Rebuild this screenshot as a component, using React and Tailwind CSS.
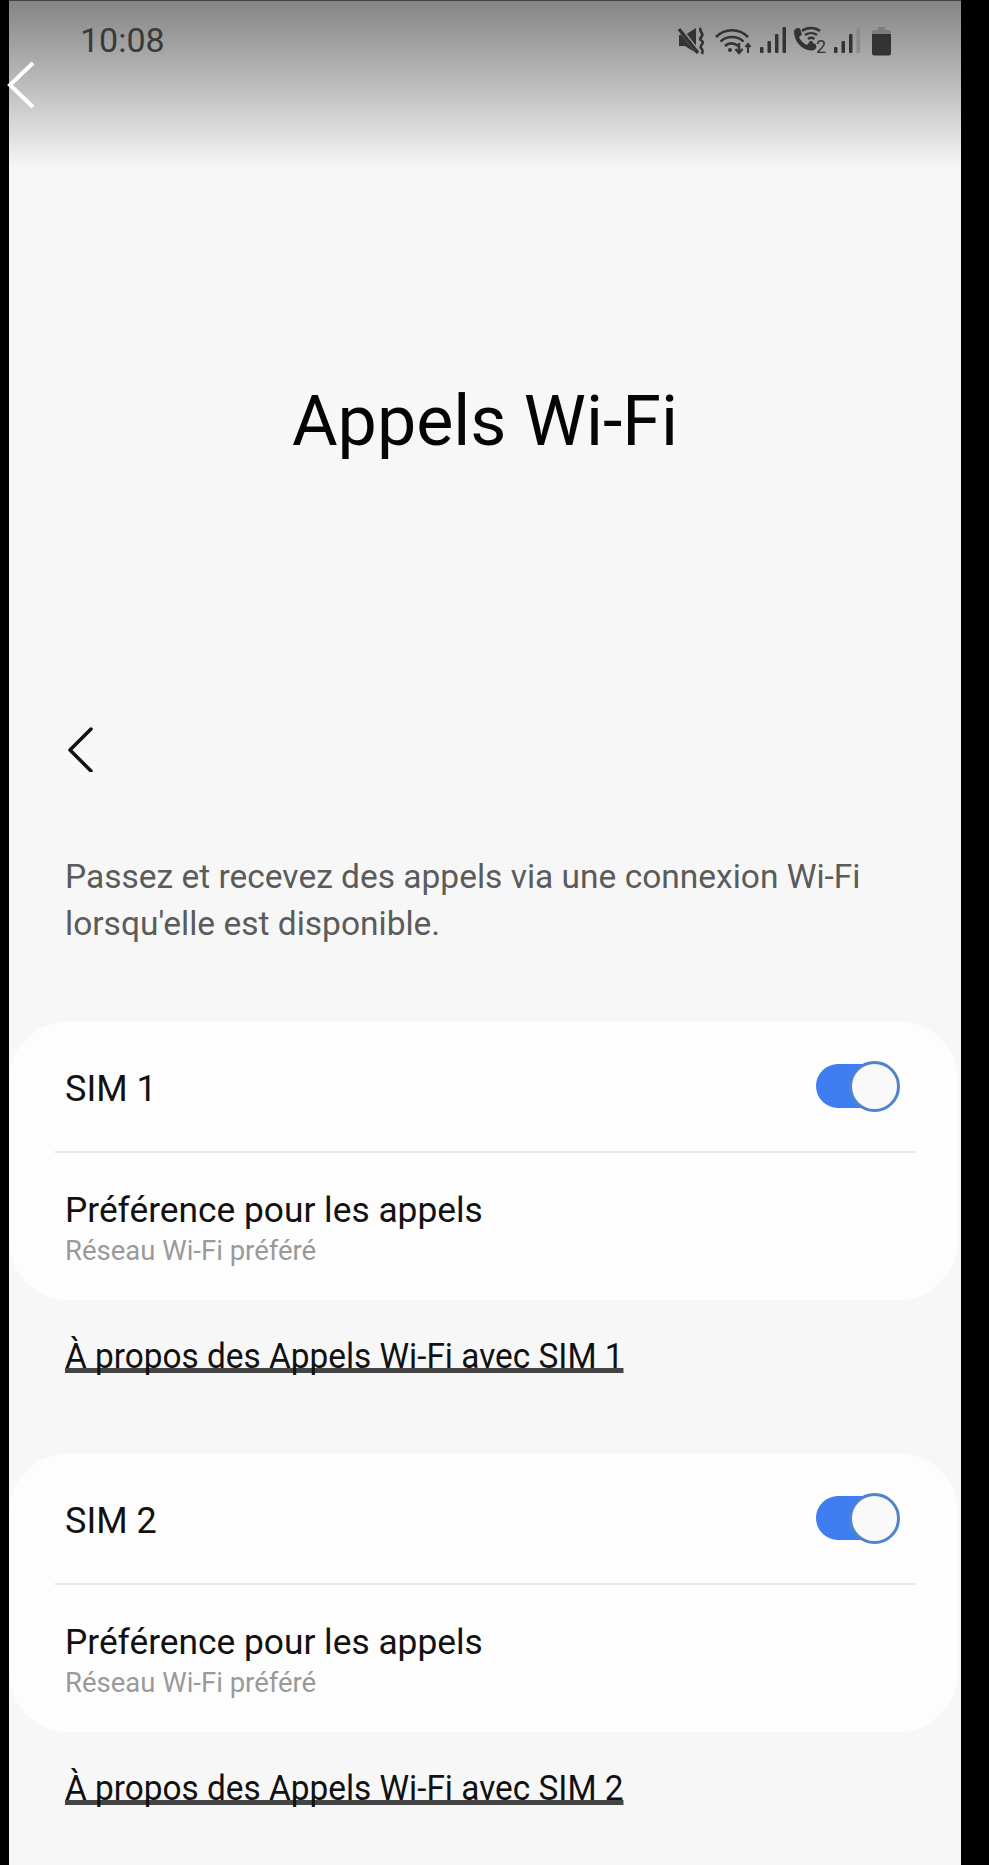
const font = { fontFamily: "Roboto, sans-serif" }

function MuteIcon() {
    return (
        <svg width="28" height="28" viewBox="0 0 28 28" fill="#333">
            <path d="M1 8h6l11-7v25l-11-7H1z" />
            <path d="M1 1l19 24" stroke="#9a9a9a" strokeWidth="5" />
            <path d="M1 2l19 24" stroke="#333" strokeWidth="3.400" />
            <path d="M23 1c-3 3 3 5 1 8s-3 3 0 5 -3 5 -1 7 2 3 1 6" fill="none" stroke="#333" strokeWidth="2.600" />
        </svg>
    )
}

function WifiIcon() {
    return (
        <svg width="38" height="28" viewBox="0 0 38 28" fill="none" stroke="#333" strokeWidth="2.600">
            <path d="M1 10c9-9 23-9 32 0" />
            <path d="M5.500 14.500c6.500-6 16.500-6 23 0" />
            <path d="M10 19c3.500-3.500 9-3.500 13 0" />
            <circle cx="15" cy="23" r="2" fill="#333" stroke="none" />
            <path d="M24 16v10M20.500 22l3.500 4 3.500-4" strokeWidth="2.400" />
            <path d="M33 26v-9M30.500 20l2.500-3 2.500 3" strokeWidth="2" />
        </svg>
    )
}

function Bars({ last = "#333" }) {
    return (
        <svg width="26" height="28" viewBox="0 0 26 28" fill="#333">
            <rect x="0" y="20" width="3.500" height="6" rx="1" />
            <rect x="7.500" y="14" width="3.500" height="12" rx="1" />
            <rect x="15" y="7" width="3.500" height="19" rx="1" />
            <rect x="22.500" y="0" width="3.500" height="26" rx="1" fill={last} />
        </svg>
    )
}

function WifiCallIcon() {
    return (
        <svg width="35" height="30" viewBox="0 0 35 30" fill="#333">
            <path d="M1 5c0-1 2-3 4-3l2 .5 2 6-3 2.500c1.500 3.500 4 6 8 8l2.500-3 6 2 1 2.500c0 2-2 4-5 4C8 24 1 15 1 5z" />
            <path d="M9 5c5-4 13-4 18 0M12 9c3.500-2.500 8.500-2.500 12 0M15 13c2-1.500 4.500-1.500 6.500 0" fill="none" stroke="#333" strokeWidth="2.400" />
            <circle cx="18" cy="16.500" r="1.800" />
            <text x="23" y="27" fontSize="18" fontFamily="Roboto, sans-serif">2</text>
        </svg>
    )
}

function BatteryIcon() {
    return (
        <svg width="19" height="29" viewBox="0 0 19 29">
            <path d="M6 0h7v3h-7z" fill="#7d7d7d" />
            <rect x="0" y="3" width="19" height="4" rx="1.500" fill="#7d7d7d" />
            <path d="M0 7h19v19a2.500 2.500 0 0 1-2.500 2.500h-14A2.500 2.500 0 0 1 0 26z" fill="#333" />
        </svg>
    )
}

function StatusBar() {
    return (
        <div className="flex items-start justify-between h-[168px] pt-[19px] pl-[71px] pr-[70px] bg-gradient-to-b from-[#858585] to-[#f7f7f7]">
            <span className="text-[34px] leading-[40px] text-[#3a3a3a]">10:08</span>
            <div className="flex items-center gap-[7px] mt-[6px]">
                <MuteIcon />
                <span className="ml-[2px]"><WifiIcon /></span>
                <Bars />
                <WifiCallIcon />
                <span className="-ml-[1px]"><Bars last="#8a8a8a" /></span>
                <span className="ml-[5px]"><BatteryIcon /></span>
            </div>
        </div>
    )
}

function Toggle() {
    return (
        <div className="relative w-[84px] h-[51px] flex items-center">
            <div className="w-[75px] h-[44px] rounded-full bg-[#3e7ef0]"></div>
            <div className="absolute right-0 top-0 w-[51px] h-[51px] rounded-full bg-[#f9f9f9] border-[3px] border-[#4f83cc]"></div>
        </div>
    )
}

function SimCard({ name }) {
    return (
        <div className="mr-[3px] h-[279px] rounded-[60px] bg-[#fdfdfd] flex flex-col">
            <div className="h-[130px] pl-[56px] pr-[58px] flex items-center justify-between">
                <span className="text-[36px] leading-[44px] mt-[5px] text-[#111]">{name}</span>
                <Toggle />
            </div>
            <div className="ml-[46px] mr-[43px] h-[2px] bg-[#e6e6e6]"></div>
            <div className="pl-[56px] pt-[36px]">
                <p className="text-[35.300px] leading-[42px] text-[#111]">Préférence pour les appels</p>
                <p className="text-[27.500px] leading-[34px] mt-[3px] text-[#9a9a9a]">Réseau Wi-Fi préféré</p>
            </div>
        </div>
    )
}

function AboutLink({ sim }) {
    return (
        <div className="pl-[56px] pt-[44px]">
            <span className="inline-block origin-left scale-x-[0.945] text-[35.300px] leading-[24px] whitespace-nowrap text-[#111] border-b-[5px] border-[#444]">
                À propos des Appels Wi-Fi avec SIM {sim}
            </span>
        </div>
    )
}

export default function App() {
    return (
        <div className="relative h-[1865px] overflow-hidden bg-black" style={font}>
            <div className="ml-[9px] w-[952px] h-full bg-[#f7f7f7] border-t border-[#444]">
                <StatusBar />
                <h1 className="pt-[212px] text-center text-[70px] leading-[80px] text-[#050505]">Appels Wi-Fi</h1>
                <div className="pl-[56px] pt-[265px]">
                    <svg width="32" height="46" viewBox="0 0 32 46" fill="none" stroke="#111" strokeWidth="3.500" strokeLinecap="round" strokeLinejoin="round">
                        <path d="M26 3 L5 24 L26 45" />
                    </svg>
                </div>
                <p className="pl-[56px] pt-[81px] text-[33.500px] leading-[47px] text-[#5b5b5b]">
                    Passez et recevez des appels via une connexion Wi-Fi<br />lorsqu'elle est disponible.
                </p>
                <div className="mt-[74px]">
                    <SimCard name="SIM 1" />
                    <AboutLink sim="1" />
                </div>
                <div className="mt-[78px]">
                    <SimCard name="SIM 2" />
                    <AboutLink sim="2" />
                </div>
            </div>
            <svg className="absolute left-[6px] top-[60px]" width="30" height="50" viewBox="0 0 30 50" fill="none" stroke="#fff" strokeWidth="4">
                <path d="M27 3 L4 25 L27 47" />
            </svg>
        </div>
    )
}
